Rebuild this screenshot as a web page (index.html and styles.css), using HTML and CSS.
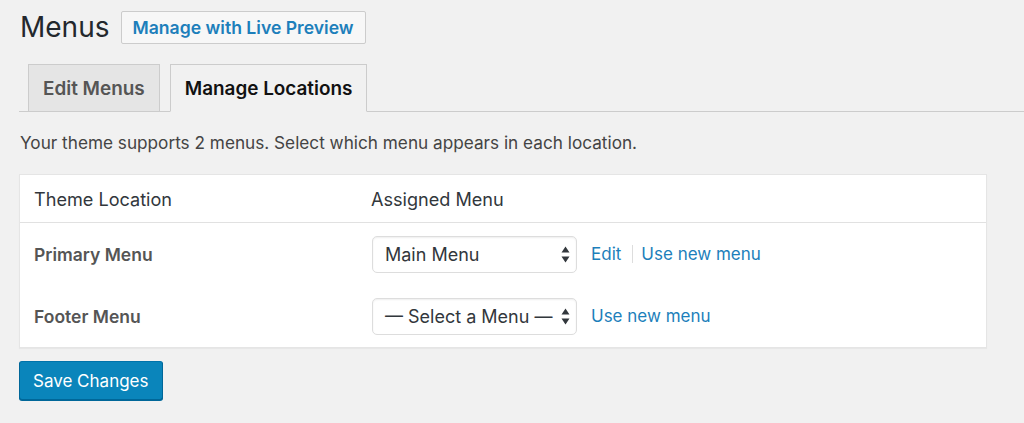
FILE: index.html
```html
<!DOCTYPE html>
<html lang="en">
<head>
<meta charset="utf-8">
<title>Menus</title>
<link rel="stylesheet" href="styles.css">
</head>
<body>
<div class="wrap">
  <div class="title-row">
    <h1 class="page-title">Menus</h1>
    <a class="title-action" href="#">Manage with Live Preview</a>
  </div>
  <nav class="tabs">
    <a class="tab" href="#">Edit Menus</a>
    <a class="tab tab-active" href="#">Manage Locations</a>
  </nav>
  <p class="intro">Your theme supports 2 menus. Select which menu appears in each location.</p>
  <div class="loc-table">
    <div class="row row-head">
      <div class="cell cell-loc">Theme Location</div>
      <div class="cell cell-menu">Assigned Menu</div>
    </div>
    <div class="row">
      <div class="cell cell-loc loc-name">Primary Menu</div>
      <div class="cell cell-menu">
        <div class="select">
          <span class="select-text">Main Menu</span>
          <svg class="arrows" width="9" height="17" viewBox="0 0 9 17"><path d="M4.5 0.5 L8.5 6.5 L0.5 6.5 Z M4.5 16.5 L8.5 10.5 L0.5 10.5 Z" fill="#32373c"/></svg>
        </div>
        <a class="link" href="#">Edit</a>
        <span class="sep"></span>
        <a class="link" href="#">Use new menu</a>
      </div>
    </div>
    <div class="row">
      <div class="cell cell-loc loc-name">Footer Menu</div>
      <div class="cell cell-menu">
        <div class="select">
          <span class="select-text">— Select a Menu —</span>
          <svg class="arrows" width="9" height="17" viewBox="0 0 9 17"><path d="M4.5 0.5 L8.5 6.5 L0.5 6.5 Z M4.5 16.5 L8.5 10.5 L0.5 10.5 Z" fill="#32373c"/></svg>
        </div>
        <a class="link" href="#">Use new menu</a>
      </div>
    </div>
  </div>
  <button class="save" type="button">Save Changes</button>
</div>
</body>
</html>
```

FILE: styles.css
```css
* { box-sizing: border-box; }
html, body {
  margin: 0;
  padding: 0;
  background: #f1f1f1;
}
body {
  font-family: Inter, "Noto Sans", Roboto, sans-serif;
  font-size: 17px;
  color: #444;
  height: 423px;
  overflow: hidden;
}
.wrap {
  padding: 11px 0 0 19px;
}
.title-row {
  display: flex;
  align-items: center;
  gap: 11px;
  height: 33px;
}
.page-title {
  margin: 0 0 0 1px;
  font-size: 28px;
  font-weight: 400;
  line-height: 33px;
  color: #23282d;
}
.title-action {
  display: flex;
  align-items: center;
  height: 33px;
  padding: 0 11px;
  border: 1px solid #ccc;
  border-radius: 2px;
  background: #f7f7f7;
  color: #1d7fbb;
  font-size: 17.6px;
  font-weight: 600;
  text-decoration: none;
}
.tabs {
  display: flex;
  gap: 10px;
  margin-top: 20px;
  padding-left: 9px;
  border-bottom: 1px solid #ccc;
  height: 48px;
}
.tab {
  display: flex;
  align-items: center;
  height: 48px;
  padding: 0 14px;
  border: 1px solid #ccc;
  background: #e5e5e5;
  color: #555;
  font-size: 18.9px;
  font-weight: 600;
  text-decoration: none;
}
.tab-active {
  background: #f1f1f1;
  color: #111;
  border-bottom-color: #f1f1f1;
}
.intro {
  margin: 20px 0 0 1px;
  line-height: 22px;
  font-size: 17.2px;
  color: #444;
}
.loc-table {
  margin-top: 20px;
  margin-right: 37px;
  background: #fff;
  border: 1px solid #e5e5e5;
  box-shadow: 0 1px 1px rgba(0,0,0,0.04);
}
.row {
  display: grid;
  grid-template-columns: 351px 1fr;
  height: 62px;
  align-items: center;
}
.row-head {
  height: 48px;
  border-bottom: 1px solid #e1e1e1;
  color: #32373c;
  font-size: 18.1px;
}
.cell-loc {
  padding-left: 14px;
}
.loc-name {
  font-weight: 600;
  font-size: 17.5px;
  color: #555;
}
.cell-menu {
  display: flex;
  align-items: center;
}
.select {
  display: flex;
  align-items: center;
  justify-content: space-between;
  width: 205px;
  height: 37px;
  margin-left: 1px;
  padding: 0 6px 0 12px;
  border: 1px solid #ddd;
  border-radius: 5px;
  background: #fff;
  color: #32373c;
  font-size: 18px;
  margin-right: 14px;
  box-shadow: 0 1px 2px rgba(0,0,0,0.07) inset;
}
.select-text {
  white-space: nowrap;
}
.link {
  color: #1d7fbb;
  text-decoration: none;
}
.sep {
  display: block;
  width: 1px;
  height: 18px;
  background: #ddd;
  margin: 0 8px 0 11px;
}
.save {
  margin-top: 13px;
  height: 39px;
  padding: 0 13px;
  background: #0a85bb;
  border: 1px solid #0073aa;
  border-color: #0073aa #006799 #006799;
  border-radius: 3px;
  box-shadow: 0 1px 0 #006799;
  color: #fff;
  font-family: inherit;
  font-size: 17px;
  font-weight: 400;
}
```
